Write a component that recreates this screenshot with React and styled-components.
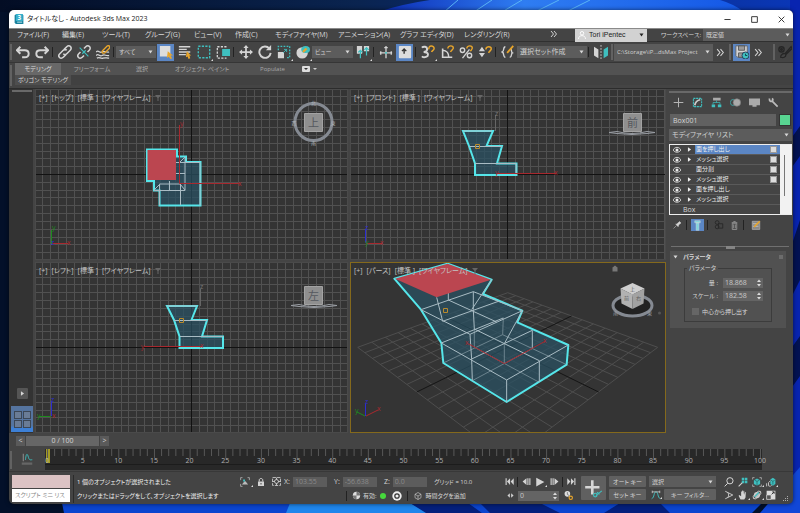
import React from 'react';
import styled, { createGlobalStyle, css } from 'styled-components';

const GlobalStyle = createGlobalStyle`
  * {
    box-sizing: border-box;
  }

  body {
    margin: 0;
    background: #04112c;
    color: #d6d6d6;
    font: 7px/10px 'Open Sans', 'Noto Sans CJK JP', sans-serif;
    font-feature-settings: 'palt';
  }

  button,
  input,
  select {
    margin: 0;
    padding: 0;
    border: 0;
    border-radius: 0;
    color: inherit;
    font: inherit;
    font-feature-settings: inherit;
  }
`;

/* ---------- desktop and window ---------- */

const Desktop = styled.div`
  position: relative;
  min-height: 100vh;
  padding: 10px 7px 9px 9px;
`;

const Wallpaper = styled.svg`
  position: absolute;
  inset: 0;
  width: 100%;
  height: 100%;
`;

const Window = styled.main`
  position: relative;
  display: flex;
  flex-direction: column;
  min-height: calc(100vh - 19px);
  overflow: hidden;
  border-radius: 5px;
  background: #444;
  box-shadow: 0 0 4px rgba(0, 0, 0, 0.6);
`;

const TitleBar = styled.header`
  display: flex;
  align-items: center;
  gap: 3px;
  height: 18px;
  padding-left: 5px;
  background: #fff;
  color: #222;
`;

const Title = styled.h1`
  flex: 1;
  margin: 0;
  font-size: 7px;
  font-weight: 400;
`;

const CaptionButton = styled.button`
  display: grid;
  place-items: center;
  width: 24px;
  height: 18px;
  background: none;
`;

const MenuBar = styled.nav`
  display: flex;
  align-items: center;
  height: 14px;
  padding-left: 8px;
  border-top: 1px solid #8a8a8a;
  border-bottom: 1px solid #303030;
`;

const MenuList = styled.div`
  display: grid;
  flex: 1;
  grid-template-columns: 45px 40px 43px 49px 41px 40px 63px 62px 64px 86px auto;
`;

const MenuButton = styled.button`
  background: none;
  color: #d8d8d8;
  text-align: left;
  white-space: nowrap;
`;

const UserButton = styled.button`
  display: flex;
  align-items: center;
  gap: 3px;
  width: 72px;
  height: 13px;
  padding: 0 3px;
  background: #d2d2d2;
  color: #222;
  font: 7px/12px 'Liberation Sans', sans-serif;

  span {
    flex: 1;
    text-align: left;
  }
`;

const WorkspaceLabel = styled.label`
  width: 56px;
  padding-right: 2px;
  font-size: 6px;
  text-align: right;
  white-space: nowrap;
`;

/* ---------- shared controls ---------- */

const SelectBox = styled.span`
  display: grid;
  flex: none;
  align-items: center;
  width: ${(p) => p.$w};
  height: ${(p) => p.$h || 12}px;
  background: #5c5c5c;
  color: #d0d0d0;
  font-size: ${(p) => (p.$small ? 6 : 7)}px;

  select {
    grid-area: 1 / 1;
    width: 100%;
    height: 100%;
    padding: 0 7px 0 3px;
    appearance: none;
    background: none;
    outline: none;
    text-overflow: ellipsis;
  }

  svg {
    grid-area: 1 / 1;
    justify-self: end;
    margin-right: 3px;
    pointer-events: none;
  }
`;

const Caret = ({ color = '#d8d8d8' }) => (
  <svg width="5" height="4" viewBox="0 0 5 4">
    <path d="M.5 .5h4L2.5 3.5z" fill={color} />
  </svg>
);

const Select = ({ label, value, id, w, h, small }) => (
  <SelectBox $w={w} $h={h} $small={small}>
    <select id={id} aria-label={label} defaultValue={value}>
      <option>{value}</option>
    </select>
    <Caret />
  </SelectBox>
);

const Bar = styled.span`
  flex: none;
  width: 1px;
  height: ${(p) => p.$h || 10}px;
  margin: 0 2px 0 1px;
  background: #222;
`;

const Grip = styled.span`
  flex: none;
  align-self: stretch;
  width: 2px;
  margin: 2px 1px;
  background: #626262;
`;

const IconButton = styled.button`
  position: relative;
  display: grid;
  flex: none;
  place-items: center;
  width: ${(p) => p.$w || 19}px;
  height: ${(p) => p.$h || 19}px;
  background: none;
  color: #d4d4d4;

  ${(p) =>
    p.$on &&
    css`
      border: 1px solid #444;
      background: #5b86c4;
    `}

  ${(p) =>
    p.$flyout &&
    css`
      &::after {
        position: absolute;
        right: 0;
        bottom: 1px;
        border: 1px solid #ddd;
        border-top-color: transparent;
        border-left-color: transparent;
        content: '';
      }
    `}
`;

const PlainButton = styled.button`
  height: 11px;
  padding: 0 2px;
  border-radius: 1px;
  background: #606060;
  color: #d4d4d4;
  font-size: 6px;
  line-height: 10px;
  white-space: nowrap;
`;

/* ---------- icons, all drawn on a 16 unit square ---------- */

const T = '#3fbfbf';
const O = '#e7a52c';

const ICONS = {
  app: (
    <g stroke="none">
      <path d="M1 2l3-2h9l2 2v14H3l-2-2z" fill="#19819c" />
      <path d="M3 0h11v11H3z" fill="#37b1cc" />
      <text x="5.5" y="9" fontSize="10" fontWeight="700" fill="#fff">3</text>
      <path d="M5 13h8" stroke="#bfeaf2" strokeWidth="1.5" />
    </g>
  ),
  undo: <path d="M5 2L1 6l4 4M1 6h9c6 0 6 8 0 8H7" strokeWidth="2.2" />,
  redo: <path d="M11 2l4 4-4 4M15 6H6c-6 0-6 8 0 8h3" strokeWidth="2.2" />,
  link: (
    <g strokeWidth="1.8">
      <path d="M7 5l3-3c3-3 7 1 4 4l-4 4c-1 1-3 1-4 0" />
      <path d="M9 11l-3 3c-3 3-7-1-4-4l4-4c1-1 3-1 4 0" />
    </g>
  ),
  unlink: (
    <g strokeWidth="1.8">
      <path d="M8 4l2-2c3-3 7 1 4 4l-2 2M8 12l-2 2c-3 3-7-1-4-4l2-2" />
      <path d="M3 3l10 10M6 10l4-4" stroke={T} strokeWidth="1.3" />
    </g>
  ),
  bind: (
    <g>
      <path d="M0 8c3-3 4 2 7 0s4 1 8 0M0 12c3-3 4 2 7 0s4 1 8 0M1 15c3-2 4 1 7 0s4 0 7 0" strokeWidth="1.4" />
      <path d="M8 6l5-5c3-1 3 2 2 3l-5 5c-3 1-4-1-2-3z" stroke={O} strokeWidth="1.6" />
    </g>
  ),
  select: (
    <g stroke="none">
      <path d="M1 1h12v12H1z" fill="#ddd" />
      <path d="M10 7l6 5-3 0 2 3-2 1-2-3-2 2z" fill={O} />
    </g>
  ),
  byName: (
    <g>
      <path d="M1 2h13M1 5h9M1 8h13M1 11h8" strokeWidth="1.6" />
      <path d="M10 7l5 5-2 0 1 3-2 1-1-3-2 1z" fill={O} stroke="none" />
    </g>
  ),
  rect: <path d="M1.5 1.5h13v13h-13z" stroke={T} strokeWidth="1.6" strokeDasharray="2.5 1.5" />,
  windowSel: (
    <g>
      <path d="M12 2H1.5v13H12" strokeWidth="1.5" strokeDasharray="2.5 1.5" />
      <path d="M7 4.5h9v8H7z" fill={T} stroke="none" />
    </g>
  ),
  move: (
    <g strokeWidth="2">
      <path d="M8 2v12M2 8h12" />
      <path d="M8 0l3 3.5H5zM8 16l3-3.5H5zM0 8l3.5-3v6zM16 8l-3.5-3v6z" fill="currentColor" stroke="none" />
    </g>
  ),
  rotate: (
    <g>
      <path d="M13 4A6.5 6.5 0 1 0 14.5 9" strokeWidth="2.2" />
      <path d="M15 0v6H9z" fill="currentColor" stroke="none" />
    </g>
  ),
  scale: (
    <g>
      <path d="M1.5 6V1.5h13v13H10" stroke={T} strokeWidth="1.5" strokeDasharray="2 1.5" />
      <path d="M1 8h7v7H1z" fill="currentColor" stroke="none" />
      <path d="M7 9l4-4M8 5h3v3" stroke={T} />
    </g>
  ),
  place: (
    <g>
      <circle cx="7" cy="9" r="6.5" fill="currentColor" stroke="none" />
      <ellipse cx="11" cy="5" rx="5" ry="4" fill={T} stroke="none" />
      <path d="M8 8l4-4" stroke={O} strokeWidth="2.5" />
    </g>
  ),
  pivot: (
    <g>
      <path d="M1 1h6v9H1zM9 1h6v6H9z" fill="currentColor" stroke="none" />
      <path d="M5 6v9M2.5 8.5L5 6l2.5 2.5M12 3v9M9.5 5.5L12 3l2.5 2.5" stroke={T} strokeWidth="1.4" />
    </g>
  ),
  manipulate: (
    <g strokeWidth="1.5">
      <path d="M8 1v14M1 9h14M6 3h4M2 7v4M14 7v4" />
      <path d="M7 8h2v2H7z" fill={T} stroke="none" />
    </g>
  ),
  override: (
    <g>
      <rect x="1" y="1" width="14" height="14" rx="1" fill="#ddd" stroke="none" />
      <path d="M7 10V5M4.5 7L7 4.500 9.500 7" stroke="#333" strokeWidth="1.6" />
    </g>
  ),
  snap: (
    <g>
      <path d="M1 3c2-2 6-1 6 1.5S5 8 3 8c3 0 5 1 5 3s-4 4.5-7 2" strokeWidth="2.2" />
      <path d="M9 5c-1-5 6-5 6-1 0 2-2 2-3 4" stroke={O} strokeWidth="1.7" />
    </g>
  ),
  angle: (
    <g>
      <path d="M3 4v10h11M3 6c5 0 7 4 7 8" strokeWidth="1.8" />
      <path d="M9 4c0-4 7-4 6 0-1 2-2 2-3 4" stroke={O} strokeWidth="1.7" />
    </g>
  ),
  percent: (
    <g>
      <circle cx="4" cy="6" r="2.5" strokeWidth="1.6" />
      <circle cx="12" cy="12" r="2.5" strokeWidth="1.6" />
      <path d="M12 5L4 15" strokeWidth="1.6" />
      <path d="M9 4c0-4 7-4 6 0-1 2-1 2-2 3" stroke={O} strokeWidth="1.7" />
    </g>
  ),
  spinner: (
    <g>
      <path d="M4.5 2L8 7H1zM4.5 14L8 9H1z" fill="currentColor" stroke="none" />
      <path d="M9 5c0-4 7-4 6 0-1 2-2 2-3 4" stroke={O} strokeWidth="1.7" />
    </g>
  ),
  braces: (
    <g>
      <path d="M5 2C2 2 4 7 1.5 8 4 9 2 14 5 14M11 5c2 0 0 3 2 4-2 1 0 5-3 5" strokeWidth="1.6" />
      <path d="M7 9l7-8" stroke={O} strokeWidth="2" />
    </g>
  ),
  mirror: (
    <g>
      <path d="M0 2l5 3v10l-5-3z" fill="currentColor" stroke="none" />
      <path d="M16 2l-5 3v10l5-3z" fill={T} stroke="none" />
      <path d="M8 0v16" strokeDasharray="2 1.5" />
    </g>
  ),
  save: (
    <g>
      <path d="M1 1h13v13H3l-2-2z" fill="#d4d4d4" stroke="#666" />
      <path d="M4 1h7v5H4zM4 9h7v5H4z" fill="#999" stroke="#555" />
      <circle cx="12" cy="12" r="4" fill={T} stroke="#235" />
      <path d="M12 10v2h2" stroke="#134" />
    </g>
  ),
  brush: (
    <g stroke="#262626" strokeWidth="1.5">
      <circle cx="4" cy="5" r="3" />
      <circle cx="4" cy="5" r="1" />
      <path d="M15 2L8 10c-2-1-5 1-5 4 3 1 6 0 6-3l7-7z" />
    </g>
  ),
  plus: <path d="M8 1v14M1 8h14" stroke="#b4b4b4" strokeWidth="1.5" />,
  modify: (
    <g stroke={T}>
      <path d="M2 2h12v12H2z" strokeWidth="1.5" strokeDasharray="3 1" />
      <path d="M4 12c1-5 3-7 8-8" stroke="#ccc" strokeWidth="2.5" />
    </g>
  ),
  hierarchy: (
    <g>
      <path d="M3 1h11v4H3z" fill="#aaa" stroke="none" />
      <path d="M8 5v3M3 11V8h10v3" stroke={T} />
      <path d="M1 11h5v4H1zM10 11h5v4h-5z" fill={T} stroke="none" />
    </g>
  ),
  motion: (
    <g>
      <circle cx="5" cy="8" r="4.5" stroke={T} />
      <circle cx="10" cy="8" r="5.5" fill="#aaa" stroke="#777" />
    </g>
  ),
  display: <path d="M0 2h16v10H0zM5 12h6v2H5z" fill="#aaa" stroke="none" />,
  wrench: <path d="M2 2c0 4 2 5 4 4l8 8M6 2c1 1 1 3 0 4" stroke="#bbb" strokeWidth="2.5" />,
  pin: <path d="M1 15l5-5M5 6l6 5M6 7l4-3 3-3 3 3-4 3-2 4z" fill="currentColor" strokeWidth="1" />,
  tube: <path d="M4 1h8v3H4zM6 4h4v11H6z" fill="#7fd6dd" stroke="#d8d8d8" strokeWidth=".7" />,
  copies: (
    <g stroke="#292929" strokeWidth="1.5">
      <circle cx="5" cy="4" r="3" />
      <path d="M7 6h7v7H7z" />
      <circle cx="5" cy="11" r="3" />
    </g>
  ),
  trash: <path d="M4 4h8v11H4zM3 3h10M6 1h4M6.5 6v7M9.5 6v7" stroke="#999" strokeWidth="1.5" />,
  configure: (
    <g>
      <path d="M2 2h12v13H2z" fill="#888" stroke="#bbb" />
      <path d="M3 6h9M3 10h9" stroke="#ddd" />
      <path d="M5 11l9-9" stroke={O} strokeWidth="2.5" />
    </g>
  ),
  curve: (
    <g>
      <path d="M3 1v10" strokeWidth="1.2" stroke="#999" />
      <path d="M6 9c1-11 3-7 4-3s3 3 5 3" stroke={T} strokeWidth="1.3" />
      <path d="M1 14h14" stroke="#666" strokeWidth="3" />
    </g>
  ),
  isolate: (
    <g>
      <path d="M1 5V1h3M12 1h3v4M1 11v4h3" />
      <path d="M3 12l5-6 5 6z" fill="#bbb" stroke="none" />
      <path d="M5 4h3v3H5z" fill={T} stroke="none" />
    </g>
  ),
  lock: (
    <g>
      <path d="M2 7h12v9H2z" fill="currentColor" stroke="none" />
      <path d="M4.5 7V4c0-4 7-4 7 0v3" strokeWidth="2" />
      <path d="M8 10v3" stroke="#444" strokeWidth="2" />
    </g>
  ),
  absolute: (
    <g strokeWidth="1.5">
      <path d="M1 1h14v14H1z" strokeDasharray="6 2" />
      <circle cx="8" cy="8" r="3.5" />
      <path d="M8 1v4M8 11v4M1 8h4M11 8h4" />
    </g>
  ),
  shield: (
    <g>
      <circle cx="8" cy="8" r="6.5" fill="#ddd" stroke="none" />
      <path d="M8 8V1.5A6.5 6.5 0 0 1 14.5 8zM8 8v6.5A6.5 6.5 0 0 1 1.5 8z" fill="#777" stroke="none" />
    </g>
  ),
  gear: (
    <g>
      <circle cx="8" cy="8" r="7.5" fill="#eee" stroke="none" />
      <circle cx="8" cy="8" r="3.5" stroke="#333" strokeWidth="2" />
    </g>
  ),
  cube: <path d="M8 1l6 3.5v7L8 15l-6-3.5v-7zM2 4.5L8 8l6-3.5M8 8v7" strokeWidth="1.2" />,
  first: <path d="M1 2h2v12H1zM9 2v12L3.5 8zM15.5 2v12L10 8z" fill="currentColor" stroke="none" />,
  prev: <path d="M8 2v12L1 8zM9.5 2h2v12h-2zM13 2h2v12h-2z" fill="currentColor" stroke="none" />,
  play: <path d="M2 1l13 7-13 7z" fill="currentColor" stroke="none" />,
  next: <path d="M8 2v12l7-6zM1 2h2v12H1zM4.5 2h2v12h-2z" fill="currentColor" stroke="none" />,
  last: <path d="M13 2h2v12h-2zM7 2v12l5.5-6zM.5 2v12L6 8z" fill="currentColor" stroke="none" />,
  keyMode: <path d="M6.5 3v10L1 8zM9.5 3v10L15 8z" fill="currentColor" stroke="none" />,
  timeConfig: (
    <g>
      <circle cx="6" cy="5" r="5" fill="#ddd" stroke="none" />
      <path d="M6 2v4l3 2" stroke="#444" />
      <circle cx="12" cy="12" r="3" stroke={O} strokeWidth="2" />
    </g>
  ),
  bigKey: (
    <g>
      <path d="M7 1v12M1 7h12" strokeWidth="2.2" />
      <path d="M10 14l5-4M11 13.5a1.5 1.5 0 1 1-3 0 1.5 1.5 0 0 1 3 0zM11 11l2 2" stroke={T} strokeWidth="1" />
    </g>
  ),
  tangent: (
    <g>
      <path d="M1 14C6 12 4 3 8 3s2 9 7 11" stroke={T} strokeWidth="1.5" />
      <path d="M2 3h12M2 1v4M14 1v4" strokeWidth="1.2" />
    </g>
  ),
  zoom: (
    <g strokeWidth="1.6">
      <circle cx="9.5" cy="6" r="5" />
      <path d="M6 10l-5 5" />
    </g>
  ),
  zoomAll: (
    <g>
      <path d="M6 1h4v4H6zM11 1h4v4h-4zM6 6h4v4H6zM11 6h4v4h-4z" fill={T} stroke="none" />
      <path d="M7 9l-6 6" strokeWidth="1.8" />
    </g>
  ),
  extents: (
    <g>
      <path d="M1 4V1h3M12 1h3v3M15 12v3h-3M4 15H1v-3" />
      <path d="M8 2.5l5 2.5v6l-5 2.5L3 11V5z" fill={T} stroke="none" />
      <path d="M4 5l4 2 4-2M8 7v6" stroke="#255" />
    </g>
  ),
  extentsAll: (
    <g>
      <path d="M7 4l4-3 4 3v7l-4 3-4-3z" fill={T} stroke="none" />
      <path d="M7 6l-3 3v5l3 1 2-2M1 10v5" stroke="#bbb" strokeWidth="1.6" />
      <path d="M8 5l3 2 3-2M11 7v5" stroke="#255" />
    </g>
  ),
  fov: <path d="M2 2l12 6-12 6M6 4c2 3 2 5 0 8" strokeWidth="1.4" />,
  hand: (
    <path
      d="M4 15l-3-6 1-1 3 2V3c0-1 1.500-1 1.500 0v4V1.500c0-1 1.500-1 1.500 0V7l.5-5c.2-1 1.500-1 1.500 0v6l1-4c.3-1 1.500-.7 1.500.3L12 12l-2 3z"
      fill="currentColor"
      stroke="none"
    />
  ),
  orbit: (
    <g>
      <circle cx="8" cy="8" r="5" fill="#bbb" stroke="none" />
      <ellipse cx="8" cy="8" rx="8" ry="3.5" transform="rotate(-45 8 8)" strokeWidth="1.5" />
      <path d="M4 11l7-7" stroke={T} strokeWidth="2" />
    </g>
  ),
  maximize: (
    <g>
      <path d="M1 1h14v14H1z" fill="#ddd" stroke="none" />
      <path d="M1 8h7v7H1z" fill="#555" stroke="#ddd" />
      <path d="M9 7l4-4M10 3h3v3" stroke="#333" strokeWidth="1.5" />
    </g>
  ),
  chevrons: <path d="M2 2l5 6-5 6M8 2l5 6-5 6" strokeWidth="1.9" />,
  person: (
    <g stroke="#fff" strokeWidth="1.8">
      <circle cx="8" cy="4.5" r="3.5" />
      <path d="M1 16c0-9 14-9 14 0" />
    </g>
  ),
  minimize: <path d="M1 8h14" strokeWidth="2" />,
  restore: <path d="M1.5 1.5h13v13h-13z" strokeWidth="2" />,
  close: <path d="M1.5 1.5l13 13M14.5 1.5l-13 13" strokeWidth="2" />,
  eye: (
    <g>
      <path d="M0 8c4-7 12-7 16 0-4 6-12 6-16 0z" strokeWidth="1.6" />
      <circle cx="8" cy="8" r="3" fill="currentColor" stroke="none" />
    </g>
  ),
  right: <path d="M3 1l10 7-10 7z" fill="currentColor" stroke="none" />,
};

const Icon = ({ name, size = 12 }) => (
  <svg width={size} height={size} viewBox="0 0 16 16" fill="none" stroke="currentColor" aria-hidden="true">
    {ICONS[name]}
  </svg>
);

/* ---------- toolbar and ribbon ---------- */

const ToolBar = styled.div`
  display: flex;
  align-items: center;
  height: 21px;
  border-bottom: 1px solid #363636;
`;

const Spring = styled.span`
  flex: 1;
`;

const Tool = ({ name, label, size = 14, ...rest }) => (
  <IconButton type="button" aria-label={label || name} {...rest}>
    <Icon name={name} size={size} />
  </IconButton>
);

const Tools = ({ names }) =>
  names.split(' ').map((n) => <Tool key={n} name={n.replace('*', '')} $flyout={n.endsWith('*')} />);

const Ribbon = styled.section`
  display: flex;
  height: 26px;
  border-bottom: 1px solid #2c2c2c;
`;

const RibbonBody = styled.div`
  flex: 1;
`;

const RibbonTabs = styled.div`
  display: grid;
  grid-template-columns: 46px 62px 38px 82px 59px auto;
  align-items: center;
  height: 12px;
  margin-left: 2px;
  background: #525252;
  color: #a8a8a8;
`;

const RibbonTab = styled.button`
  height: 12px;
  background: ${(p) => (p.$on ? '#686868' : 'none')};
  color: ${(p) => (p.$on ? '#dcdcdc' : 'inherit')};
  font-size: 6px;
  line-height: 11px;
  white-space: nowrap;
`;

const RibbonPanel = styled.div`
  height: 10px;
  margin: 0 0 3px 2px;
  background: #414141;

  button {
    min-width: 56px;
    height: 10px;
    background: #4e4e4e;
    font-size: 6px;
    white-space: nowrap;
  }
`;

/* ---------- work area ---------- */

const WorkArea = styled.div`
  display: grid;
  flex: 1;
  grid-template-columns: 26px minmax(0, 1fr) 127px;
  min-height: 344px;
`;

const Rail = styled.aside`
  display: flex;
  flex-direction: column;
  align-items: center;
  justify-content: flex-end;
  gap: 7px;
  margin-right: 2px;
  padding: 1px 0 1px 2px;
  background: #333;
`;

const RailGrip = styled.span`
  width: 20px;
  height: 2px;
  margin-bottom: auto;
  background: #696969;
`;

const RailButton = styled.button`
  display: grid;
  place-items: center;
  width: 11px;
  height: 11px;
  border-radius: 1px;
  background: #555;
`;

const LayoutButton = styled.button`
  display: grid;
  grid-template-columns: 8px 8px;
  grid-template-rows: 8px 8px;
  place-content: center;
  gap: 1px;
  width: 22px;
  height: 26px;
  background: linear-gradient(#55749f 75%, #3d80d6 85%);

  span {
    border: 1px solid #3c4756;
    background: #6a7c96;
  }
`;

const Viewports = styled.section`
  display: grid;
  grid-template-columns: 313fr 316fr;
  grid-template-rows: 1fr 1fr;
  gap: 2px;
`;

const ViewportFrame = styled.div`
  position: relative;
  min-width: 0;
  min-height: 171px;
  overflow: hidden;
  border: 1px solid ${(p) => (p.$active ? '#84691c' : '#4a4a4a')};
  background: #343434;
`;

const Scene = styled.svg`
  position: absolute;
  inset: 0;
  width: 100%;
  height: 100%;

  text {
    font: 7px 'Open Sans', 'Noto Sans CJK JP', sans-serif;
  }

  .small {
    font-size: 5px;
  }

  .face {
    font: 11px 'Noto Sans CJK JP', sans-serif;
  }
`;

const ViewportLabel = styled.div`
  position: absolute;
  top: 3px;
  left: 3px;
  display: flex;
  align-items: center;
  gap: 4px;
  color: #c4c4c4;
  white-space: nowrap;
`;

const STEP = 7.83;

const RED = '#a8282e';
const GREEN = '#1e8a1e';
const BLUE = '#2c2cd0';

// Orthographic grid; the two lines through the origin are black.
const FlatGrid = ({ x, y, cx, cy, w, h }) => {
  const cols = [];
  const rows = [];
  for (let i = -24; i <= 24; i += 1) {
    const gx = Math.round(cx + i * STEP) + 0.5;
    const gy = Math.round(cy + i * STEP) + 0.5;
    if (i !== 0 && gx > x && gx < x + w) cols.push(gx);
    if (i !== 0 && gy > y && gy < y + h) rows.push(gy);
  }
  return (
    <g>
      <g stroke="#515151">
        {cols.map((v) => (
          <path key={v} d={`M${v} ${y}v${h}`} />
        ))}
        {rows.map((v) => (
          <path key={v} d={`M${x} ${v}h${w}`} />
        ))}
      </g>
      <path d={`M${cx + 0.5} ${y}v${h}M${x} ${cy + 0.5}h${w}`} stroke="#121212" />
    </g>
  );
};

// Ground plane point (-1..1 on both axes) to the perspective view.
const project = (p, q) => {
  const w = 1 + 0.175 * (p + q);
  return `${(507.7 + (75 * (p - q)) / w).toFixed(1)} ${(136.8 + 210.5 / w).toFixed(1)}`;
};

const GroundGrid = () => {
  const lines = [-7, -6, -5, -4, -3, -2, -1, 1, 2, 3, 4, 5, 6, 7].map((n) => n / 7);
  return (
    <g fill="none">
      <g stroke="#4e4e4e">
        {lines.map((t) => (
          <path key={t} d={`M${project(t, -1)}L${project(t, 1)}M${project(-1, t)}L${project(1, t)}`} />
        ))}
      </g>
      <path d={`M${project(0, -1)}L${project(0, 1)}M${project(-1, 0)}L${project(1, 0)}`} stroke="#151515" />
    </g>
  );
};

const Solid = styled.path`
  fill: rgba(42, 82, 100, 0.72);
  stroke: #55e6ea;
  stroke-width: 2px;
`;

const Wire = styled.path`
  fill: none;
  stroke: #a9bcc4;
  stroke-width: 1px;
`;

const Axis = styled.path`
  fill: none;
  stroke: ${(p) => p.$c || RED};
  stroke-width: 1px;
`;

const Marker = ({ x, y }) => (
  <path d={`M${x - 2} ${y - 2}h4v4h-4z`} fill="none" stroke="#b98a2c" strokeWidth="1" />
);

const CubeFace = ({ x, y, face }) => (
  <g>
    <path d={`M${x - 9} ${y - 9}h18v18h-18z`} fill="#8f8f8f" stroke="#a3a3a3" />
    <text className="face" x={x} y={y + 4} textAnchor="middle" fill="#55585e">{face}</text>
  </g>
);

const FlatRing = ({ x, y }) => (
  <g fill="none" stroke="#9a9ea4">
    <path d={`M${x - 23} ${y}l8-1q15 4 30 0l8 1-8 1q-15 2-30 0z`} />
  </g>
);

const Filter = () => (
  <svg width="6" height="6" viewBox="0 0 6 6">
    <path d="M0 0h6L3.5 3v3h-1V3z" fill="#666" />
  </svg>
);

const Viewport = ({ name, box, active, children }) => (
  <ViewportFrame $active={active}>
    <Scene viewBox={box} preserveAspectRatio="xMidYMid slice">
      {children}
    </Scene>
    <ViewportLabel>
      <span>[+]</span>
      <span>[{name}]</span>
      <span>[標準 ]</span>
      <span>[ワイヤフレーム]</span>
      <Filter />
    </ViewportLabel>
  </ViewportFrame>
);

const TopView = () => (
  <Viewport name="トップ" box="36 90 311 169">
    <FlatGrid x={36} y={90} cx={191} cy={174} w={311} h={169} />
    <Solid d="M147 149.5H177V156.5H186V162H200.5V205.5H159.5V190.5H154V181H147z" />
    <Wire d="M176 162.5h24v43M159.5 205v-21h21v21M169.5 181v9M154 190.5h31V157M176 173.5h9M154 190l6-6M180 162l5-5M180 184l5 6" />
    <path d="M147.5 150h28.5v30h-28.5z" fill="#bb4650" />
    <Axis d="M179.5 125v58.5h60" />
    <text x="180" y="126" fill={RED}>y</text>
    <text x="238" y="186" fill={RED}>x</text>
    <Axis d="M51.5 230v14" $c={GREEN} />
    <Axis d="M52 243.5h16" />
    <text x="52" y="230" fill={GREEN}>y</text>
    <text x="67" y="245" fill={RED}>x</text>
    <text x="51" y="245" fill={BLUE}>z</text>
    <circle cx="313.5" cy="122" r="18.5" fill="none" stroke="#858a92" strokeWidth="3" />
    <g fill="#aeb2b8" textAnchor="middle">
      <text className="small" x="313.5" y="105">北</text>
      <text className="small" x="313.5" y="145">南</text>
      <text className="small" x="294" y="125">西</text>
      <text className="small" x="333" y="125">東</text>
    </g>
    <CubeFace x={313.5} y={122.5} face="上" />
  </Viewport>
);

const FrontView = () => (
  <Viewport name="フロント" box="351 90 314 169">
    <FlatGrid x={351} y={90} cx={507} cy={174} w={314} h={169} />
    <Solid d="M463 131H493L486.5 146H502L497 163.5H516.5V175H475V163.5L469 146z" />
    <Wire d="M463 131h29M469 146.5h33M475 163.5h41V175" />
    <Marker x={477.5} y={146.5} />
    <Axis d="M495.5 115v16" $c="#666" />
    <text x="495" y="116" fill="#777">z</text>
    <Axis d="M497 173.5h59" />
    <text x="495" y="175" fill={RED}>y</text>
    <text x="554" y="175" fill={RED}>x</text>
    <Axis d="M365.5 229v14" $c={BLUE} />
    <Axis d="M367 243.5h15" />
    <text x="365" y="230" fill={BLUE}>z</text>
    <text x="380" y="245" fill={RED}>x</text>
    <text x="365" y="245" fill={GREEN}>y</text>
    <FlatRing x={632} y={132.5} />
    <CubeFace x={632.5} y={122.5} face="前" />
  </Viewport>
);

const LeftView = () => (
  <Viewport name="レフト" box="36 263 311 169">
    <FlatGrid x={36} y={263} cx={191} cy={347} w={311} h={169} />
    <Solid d="M167 306H197L191.5 320H207L202 336.5H223V348H179.5V336.5L174 320z" />
    <Wire d="M167 306h30M174 320.5h33M180 336.5h43" />
    <Marker x={181.5} y={320.5} />
    <Axis d="M200.5 289v17" $c="#666" />
    <text x="200" y="289" fill="#777">z</text>
    <Axis d="M144 346.5h58" />
    <text x="141" y="349" fill={RED}>y</text>
    <text x="200" y="348" fill={RED}>x</text>
    <Axis d="M51.5 402v14" $c={BLUE} />
    <Axis d="M39 416.5h12" $c={GREEN} />
    <text x="51" y="402" fill={BLUE}>z</text>
    <text x="37" y="418" fill={GREEN}>y</text>
    <text x="52" y="418" fill={RED}>x</text>
    <FlatRing x={314} y={305.5} />
    <CubeFace x={313.5} y={295.5} face="左" />
  </Viewport>
);

const PerspectiveView = () => (
  <Viewport name="パース" box="351 263 314 169" active>
    <GroundGrid />
    <g transform="translate(345 258) scale(.3333)">
      <Solid
        vectorEffect="non-scaling-stroke"
        strokeLinejoin="round"
        d="M148 62L308 17 440 65 414 108 532 158 517 193 670 261 665 320 485 432 295 315 289 255 228 155z"
      />
      <Wire
        vectorEffect="non-scaling-stroke"
        d="M275 118l18 72M310 100v26M440 65l-60 90M385 101v54M228 155L385 101 532 158 375 229zM293 190L460 130M310 126L455 192M375 229l5 74M532 158l-54 99M385 155l3 58"
      />
      <Wire
        vectorEffect="non-scaling-stroke"
        d="M289 255L475 180M670 261L485 366 289 255M388 213L583 308v64M380 303L562 217v55M380 303l2 65M485 366v66"
      />
      <Wire
        vectorEffect="non-scaling-stroke"
        opacity=".5"
        d="M475 180l-2 50M295 315L473 230 665 320M388 213v55L581 372M382 368L562 272M478 257v58"
      />
      <path d="M150 62L308 17 438 65 275 118z" fill="#bb4650" />
      <Axis vectorEffect="non-scaling-stroke" d="M370 257l108 60 122-67" />
    </g>
    <text x="465" y="345" fill={RED}>x</text>
    <text x="543" y="343" fill={RED}>x</text>
    <Marker x={445.5} y={310.5} />
    <Axis d="M365.5 404v12" $c={BLUE} />
    <Axis d="M366 416l12-6" />
    <Axis d="M365 416l-8-4" $c={GREEN} />
    <text x="365" y="404" fill={BLUE}>z</text>
    <text x="377" y="411" fill={RED}>x</text>
    <text x="355" y="413" fill={GREEN}>y</text>
    <path d="M615 265.5l3 2.5h-.5v3.5h-5V268h-.5z" fill="#777" />
    <ellipse cx="632.5" cy="305.5" rx="19.5" ry="10.5" fill="#222" stroke="#858a92" strokeWidth="3" />
    <path d="M632.5 283l12 5.5-12 6-12-6z" fill="#cfcfcf" />
    <path d="M620.5 288.5l12 6v14.5l-11-5.5z" fill="#b2b2b2" />
    <path d="M644.5 288.5l-12 6v14.5l11-5.5z" fill="#a2a2a2" />
    <g fill="#5c5c5c">
      <text className="small" x="630" y="291">上</text>
      <text className="small" x="624" y="300">前</text>
      <text className="small" x="636" y="300">右</text>
    </g>
    <g fill="#9a9ea4">
      <text className="small" x="613" y="315">南</text>
      <text className="small" x="647" y="315">東</text>
    </g>
    <circle cx="659.5" cy="313" r="1.5" fill="#555" />
  </Viewport>
);

/* ---------- command panel ---------- */

const Panel = styled.aside`
  display: flex;
  flex-direction: column;
  padding: 2px 1px 0 3px;
`;

const PanelGrip = styled.div`
  height: 2px;
  background: #696969;
`;

const PanelTabs = styled.div`
  display: flex;
  margin: 1px 0 2px;
`;

const NameRow = styled.div`
  display: flex;
  gap: 3px;
  margin: 1px 1px 3px;

  input {
    flex: 1;
    min-width: 0;
    height: 12px;
    padding: 0 3px;
    background: #616161;
  }

  button {
    width: 12px;
    height: 12px;
    border: 1px solid #333;
    background: #58d491;
  }
`;

const Stack = styled.div`
  display: grid;
  grid-template-columns: 1fr 11px;
  height: 71px;
  margin: 3px 0;
  overflow: hidden;
  border: 1px solid #eee;
`;

const StackList = styled.ul`
  margin: 0;
  padding: 0;
  font-size: 6px;
  list-style: none;
`;

const StackRow = styled.li`
  display: grid;
  grid-template-columns: 14px 8px 1fr;
  align-items: center;
  height: 10px;
  padding-left: 3px;
  border-bottom: 1px solid #5a5a5a;
  color: #eee;
  line-height: 9px;
`;

const StackName = styled.span`
  display: flex;
  align-items: center;
  justify-content: space-between;
  grid-column: 3;
  height: 9px;
  padding-right: 3px;
  padding-left: 1px;
  background: ${(p) => (p.$on ? '#5b86c4' : 'none')};

  i {
    width: 7px;
    height: 7px;
    border: 1px solid #999;
    background: #ddd;
  }
`;

const BaseRow = styled.li`
  padding-left: 13px;
  font-size: 7px;
  line-height: 10px;
`;

const StackScroll = styled.div`
  padding: 10px 0 0 4px;
  background: #f2f2f2;

  &::before {
    display: block;
    width: 1px;
    height: 41px;
    background: #777;
    content: '';
  }
`;

const StackTools = styled.div`
  display: flex;
  align-items: center;
  gap: 1px;
  height: 14px;
`;

const Splitter = styled.div`
  height: 1px;
  margin: 14px 3px 4px 2px;
  background: #707070;

  &::after {
    display: block;
    width: 9px;
    height: 3px;
    margin: auto;
    background: #858585;
    content: '';
  }
`;

const Rollout = styled.section`
  margin: 0 6px 0 1px;
  padding: 1px 14px 6px;
  background: #515151;
  font-size: 6px;

  h2 {
    display: flex;
    align-items: center;
    gap: 5px;
    margin: 0 -11px 2px;
    font-size: 6px;
    line-height: 10px;
  }

  h2::after {
    width: 4px;
    height: 4px;
    margin-left: auto;
    background: #6c6c6c;
    content: '';
  }
`;

const Group = styled.fieldset`
  display: grid;
  gap: 3px;
  margin: 0;
  padding: 6px 7px 4px;
  border: 1px solid #3c3c3c;

  legend {
    margin-left: -5px;
    padding: 0 2px;
    line-height: 8px;
  }
`;

const Param = styled.div`
  display: grid;
  grid-template-columns: 1fr 40px;
  align-items: center;
  gap: 5px;
  padding-right: 1px;

  label {
    text-align: right;
    white-space: nowrap;
  }
`;

const Spin = styled.span`
  display: flex;
  align-items: center;
  justify-content: space-between;
  width: ${(p) => (p.$w ? `${p.$w}px` : 'auto')};
  height: 10px;
  padding: 0 2px;
  background: #646464;
  color: #c8c8c8;
  font-size: 7px;

  input {
    flex: 1;
    width: 100%;
    min-width: 0;
    background: none;
  }
`;

const Arrows = () => (
  <svg width="4" height="8" viewBox="0 0 4 8">
    <path d="M0 3l2-2.5L4 3zM0 5l2 2.5L4 5z" fill="#ddd" />
  </svg>
);

const Check = styled.label`
  display: flex;
  align-items: center;
  gap: 3px;
  height: 11px;
  margin-top: 2px;
  white-space: nowrap;

  input {
    width: 7px;
    height: 7px;
    appearance: none;
    background: #666;
  }
`;

const PANEL_TABS = ['plus', 'modify', 'hierarchy', 'motion', 'display', 'wrench'];

const MODIFIERS = [
  { name: '面を押し出し', open: true, box: true, on: true },
  { name: 'メッシュ選択', open: true, box: true },
  { name: '面分割', box: true },
  { name: 'メッシュ選択', open: true, box: true },
  { name: '面を押し出し', open: true },
  { name: 'メッシュ選択', open: true },
];

const CommandPanel = () => (
  <Panel>
    <PanelGrip />
    <PanelTabs>
      {PANEL_TABS.map((t) => (
        <Tool key={t} name={t} size={11} $h={17} />
      ))}
    </PanelTabs>
    <NameRow>
      <input aria-label="オブジェクト名" defaultValue="Box001" />
      <button type="button" aria-label="オブジェクト カラー" />
    </NameRow>
    <Select label="モディファイヤ リスト" value="モディファイヤ リスト" w="100%" h={12} />
    <Stack>
      <StackList>
        {MODIFIERS.map((m, i) => (
          <StackRow key={i}>
            <Icon name="eye" size={8} />
            {m.open && <Icon name="right" size={5} />}
            <StackName $on={m.on}>
              {m.name}
              {m.box && <i />}
            </StackName>
          </StackRow>
        ))}
        <BaseRow>Box</BaseRow>
      </StackList>
      <StackScroll />
    </Stack>
    <StackTools>
      <Tool name="pin" size={8} $w={15} $h={14} />
      <Bar />
      <Tool name="tube" size={11} $w={15} $h={14} $on />
      <Bar />
      <Tool name="copies" size={10} $w={16} $h={14} />
      <Tool name="trash" size={9} $w={13} $h={14} />
      <Bar />
      <Tool name="configure" size={10} $w={17} $h={14} />
    </StackTools>
    <Splitter />
    <Rollout>
      <h2>
        <Caret />
        パラメータ
      </h2>
      <Group>
        <legend>パラメータ</legend>
        <Param>
          <label htmlFor="amount">量 :</label>
          <Spin>
            <input id="amount" defaultValue="18.868" />
            <Arrows />
          </Spin>
        </Param>
        <Param>
          <label htmlFor="scale">スケール :</label>
          <Spin>
            <input id="scale" defaultValue="182.58" />
            <Arrows />
          </Spin>
        </Param>
        <Check>
          <input type="checkbox" />
          中心から押し出す
        </Check>
      </Group>
    </Rollout>
  </Panel>
);

/* ---------- time line ---------- */

const SliderRow = styled.div`
  display: flex;
  align-items: center;
  gap: 1px;
  height: 16px;
  padding: 0 7px;

  button {
    width: 9px;
    height: 10px;
    background: #5a5a5a;
  }
`;

const SliderThumb = styled.div`
  width: 73px;
  height: 10px;
  background: #666;
  line-height: 10px;
  text-align: center;
`;

const TrackRow = styled.div`
  display: flex;
  height: 22px;
`;

const TrackTools = styled.div`
  flex: none;
  width: 32px;
`;

const Track = styled.div`
  flex: 1;
  height: 21px;
  margin-right: 31px;
  padding: 0 2px;
  background: linear-gradient(#282828 15px, #1c1c1c 15px 16px, #282828 16px);

  svg {
    display: block;
    width: 100%;
    height: 21px;
    overflow: visible;
  }

  text {
    fill: #b0b0b0;
  }
`;

const FRAMES = Array.from({ length: 101 }, (_, i) => i);

const TimeTrack = () => (
  <TrackRow>
    <Grip />
    <TrackTools>
      <Tool name="curve" size={12} $w={28} />
    </TrackTools>
    <Track>
      <svg>
        <rect x="-1" y="0" width="4" height="14" fill="#a39a24" />
        {FRAMES.map((f) => (
          <rect key={f} x={`${f}%`} y="0" width="1" height={f % 5 ? 7 : 9} fill="#585858" />
        ))}
        {FRAMES.filter((f) => f % 5 === 0).map((f) => (
          <text key={f} x={`${f}%`} y="14" textAnchor="middle">
            {f}
          </text>
        ))}
      </svg>
    </Track>
  </TrackRow>
);

/* ---------- status bar ---------- */

const StatusBar = styled.footer`
  display: flex;
  align-items: flex-start;
  height: 33px;
  padding: 3px 2px 2px 3px;
  border-top: 1px solid #383838;
`;

const Listener = styled.div`
  display: grid;
  flex: none;
  grid-template-rows: 13px 13px;
  gap: 1px;
  width: 58px;
  color: #888;
  font-size: 6px;
  line-height: 13px;
  white-space: nowrap;

  input {
    width: 100%;
    background: #dcc3c4;
  }

  span {
    padding-left: 3px;
    background: #fff;
  }
`;

const Messages = styled.div`
  flex: 1;
  min-width: 0;
  margin-left: 3px;
  padding-left: 3px;
  border-left: 1px solid #2b2b2b;
  color: #eee;
  font-size: 6px;
  line-height: 14px;
  white-space: nowrap;

  p {
    margin: 0;
  }
`;

const Coords = styled.div`
  display: grid;
  gap: 1px;
  width: 266px;
`;

const CoordRow = styled.div`
  display: flex;
  align-items: center;
  height: 13px;
  padding-left: ${(p) => p.$indent || 0}px;
  white-space: nowrap;
`;

const Note = styled.span`
  font-size: 6px;
`;

const Coord = styled.label`
  display: flex;
  align-items: center;
  gap: 3px;
  width: 50px;

  input {
    width: 34px;
    height: 10px;
    padding: 0 2px;
    background: #5c5c5c;
    color: #8a8a8a;
  }
`;

const Lamp = styled.span`
  width: 6px;
  height: 6px;
  margin: 0 3px;
  border-radius: 50%;
  background: #46d83c;
`;

const Playback = styled.div`
  display: grid;
  gap: 1px;
  width: 76px;
`;

const Keys = styled.div`
  display: grid;
  grid-template-columns: 25px 37px 67px;
  grid-template-rows: 11px 11px;
  gap: 2px 3px;
  margin: 1px 6px 0 2px;
`;

const BigKey = styled.button`
  display: grid;
  grid-row: span 2;
  place-items: center;
  border-radius: 1px;
  background: #606060;
`;

const FilterCell = styled.span`
  display: grid;
  grid-template-columns: 15px 1fr;
  align-items: center;
`;

const Navigation = styled.div`
  display: grid;
  grid-template-columns: repeat(4, 14px);
  grid-auto-rows: 13px;
  margin-right: 5px;
`;

const SizeGrip = styled.svg`
  align-self: flex-end;
  width: 6px;
  height: 6px;
  margin-right: 2px;
`;

const MENUS = [
  'ファイル(F)',
  '編集(E)',
  'ツール(T)',
  'グループ(G)',
  'ビュー(V)',
  '作成(C)',
  'モディファイヤ(M)',
  'アニメーション(A)',
  'グラフ エディタ(D)',
  'レンダリング(R)',
];

const TABS = ['モデリング', 'フリーフォーム', '選択', 'オブジェクト ペイント', 'Populate'];

const App = () => (
  <>
    <GlobalStyle />
    <Desktop>
      <Wallpaper viewBox="0 0 800 513" preserveAspectRatio="none">
        <defs>
          <linearGradient id="sky">
            <stop offset="0" stopColor="#030d24" />
            <stop offset=".45" stopColor="#0a2450" />
            <stop offset="1" stopColor="#0a37b8" />
          </linearGradient>
          <linearGradient id="petal">
            <stop offset="0" stopColor="#0c2cb4" />
            <stop offset=".4" stopColor="#2f7df2" />
            <stop offset="1" stopColor="#1457e6" />
          </linearGradient>
        </defs>
        <path d="M0 0h800v513H0z" fill="#031029" />
        <path d="M0 0h800v12H0z" fill="url(#sky)" />
        <path d="M378 12q24-8 52-12h290q14 4 24 12z" fill="url(#petal)" />
        <path d="M444 12l14-12M474 12l18-12M502 12l20-12M535 12l24-12M566 12l24-12" stroke="#5ab4f4" />
        <path d="M790 0h10v513h-10z" fill="#0824b0" />
        <path d="M790 140l10-14v30l-10 14zM790 250l10-30v60l-10 20zM790 350l10-14v40l-10 14z" fill="#031252" />
        <path d="M62 503h700l-10 10H64z" fill="#0b45cf" />
        <path d="M290 503h120l20 10H286z" fill="#1f86ec" />
        <path d="M410 503h58l14 10h-56zM480 503h60l20 10h-70zM620 503h40l10 10h-66z" fill="#04207c" />
        <path d="M760 513l40-46v46z" fill="#1147d8" />
      </Wallpaper>
      <Window>
        <TitleBar>
          <Icon name="app" size={10} />
          <Title>タイトルなし - Autodesk 3ds Max 2023</Title>
          {['minimize', 'restore', 'close'].map((n) => (
            <CaptionButton key={n} type="button" aria-label={n}>
              <Icon name={n} size={7} />
            </CaptionButton>
          ))}
        </TitleBar>

        <MenuBar>
          <MenuList>
            {MENUS.map((m) => (
              <MenuButton key={m} type="button">
                {m}
              </MenuButton>
            ))}
            <MenuButton type="button" aria-label="その他">
              <Icon name="chevrons" size={8} />
            </MenuButton>
          </MenuList>
          <UserButton type="button">
            <Icon name="person" size={8} />
            <span>Tori iPentec</span>
            <Caret color="#222" />
          </UserButton>
          <WorkspaceLabel htmlFor="workspace">ワークスペース:</WorkspaceLabel>
          <Select id="workspace" value="既定値" w="90px" small />
        </MenuBar>

        <ToolBar>
          <Grip />
          <Tools names="undo redo" />
          <Bar />
          <Tools names="link unlink bind" />
          <Bar />
          <Select label="選択フィルタ" value="すべて" w="40px" small />
          <Tool name="select" $on />
          <Tools names="byName rect* windowSel" />
          <Bar />
          <Tools names="move rotate scale* place*" />
          <Select label="参照座標系" value="ビュー" w="41px" small />
          <Tools names="pivot*" />
          <Bar />
          <Tools names="manipulate" />
          <Tool name="override" $on />
          <Bar />
          <Tools names="snap* angle percent spinner" />
          <Bar />
          <Tools names="braces" />
          <Select label="名前付き選択セット" value="選択セット作成" w="70px" />
          <Bar />
          <Tools names="mirror" />
          <Grip />
          <Select label="プロジェクト" value="C:\Storage\iP...dsMax Project" w="99px" h={17} small />
          <Tool name="chevrons" label="その他" size={9} $w={15} />
          <Grip />
          <Tool name="save" $on />
          <Tool name="chevrons" label="その他" size={9} $w={15} />
          <Spring />
          <Grip />
          <Tool name="brush" $w={17} />
        </ToolBar>

        <Ribbon>
          <Grip />
          <RibbonBody>
            <RibbonTabs>
              {TABS.map((t, i) => (
                <RibbonTab key={t} type="button" $on={i === 0}>
                  {t}
                </RibbonTab>
              ))}
              <svg width="16" height="6" viewBox="0 0 16 6">
                <rect width="8" height="6" rx="1" fill="#ddd" />
                <path d="M2 2h4L4 4z" fill="#333" />
                <path d="M11 2h4l-2 2z" fill="#ccc" />
              </svg>
            </RibbonTabs>
            <RibbonPanel>
              <button type="button">ポリゴン モデリング</button>
            </RibbonPanel>
          </RibbonBody>
        </Ribbon>

        <WorkArea>
          <Rail>
            <RailGrip />
            <RailButton type="button" aria-label="展開">
              <Icon name="right" size={5} />
            </RailButton>
            <LayoutButton type="button" aria-label="ビューポート レイアウト">
              <span />
              <span />
              <span />
              <span />
            </LayoutButton>
          </Rail>
          <Viewports>
            <TopView />
            <FrontView />
            <LeftView />
            <PerspectiveView />
          </Viewports>
          <CommandPanel />
        </WorkArea>

        <SliderRow>
          <button type="button">&lt;</button>
          <SliderThumb>0 / 100</SliderThumb>
          <button type="button">&gt;</button>
        </SliderRow>
        <TimeTrack />

        <StatusBar>
          <Listener>
            <input aria-label="マクロ レコーダ" />
            <span>スクリプト ミニ リス</span>
          </Listener>
          <Messages>
            <p>1 個のオブジェクトが選択されました</p>
            <p>クリックまたはドラッグをして、オブジェクトを選択します</p>
          </Messages>
          <Coords>
            <CoordRow>
              <Tool name="isolate" size={10} $w={16} $h={13} $flyout />
              <Tool name="lock" size={8} $w={16} $h={13} />
              <Tool name="absolute" size={9} $w={15} $h={13} />
              <Coord>
                X: <input defaultValue="103.55" />
              </Coord>
              <Coord>
                Y: <input defaultValue="-56.638" />
              </Coord>
              <Coord>
                Z: <input defaultValue="0.0" />
              </Coord>
              <Note>グリッド = 10.0</Note>
            </CoordRow>
            <CoordRow $indent={108}>
              <Bar />
              <Tool name="shield" size={9} $w={14} $h={13} />
              <Note>有効:</Note>
              <Lamp />
              <Tool name="gear" size={10} $w={17} $h={13} />
              <Bar />
              <Tool name="cube" size={8} $w={16} $h={13} />
              <Note>時間タグを追加</Note>
            </CoordRow>
          </Coords>
          <Playback>
            <CoordRow>
              <Tool name="first" size={9} $w={13} $h={13} />
              <Bar />
              <Tool name="prev" size={9} $w={13} $h={13} />
              <Tool name="play" size={10} $w={14} $h={13} $flyout />
              <Tool name="next" size={9} $w={14} $h={13} />
              <Bar />
              <Tool name="last" size={9} $w={13} $h={13} />
            </CoordRow>
            <CoordRow>
              <Tool name="keyMode" size={7} $w={15} $h={13} />
              <Spin $w={41}>
                <input aria-label="現在のフレーム" defaultValue="0" />
                <Arrows />
              </Spin>
              <Tool name="timeConfig" size={9} $w={18} $h={13} />
            </CoordRow>
          </Playback>
          <Keys>
            <BigKey type="button" aria-label="キーを設定">
              <Icon name="bigKey" size={19} />
            </BigKey>
            <PlainButton type="button">オート キー</PlainButton>
            <Select label="キー対象" value="選択" w="100%" h={11} small />
            <PlainButton type="button">セット キー</PlainButton>
            <FilterCell>
              <Tool name="tangent" size={10} $w={13} $h={11} $flyout />
              <PlainButton type="button">キー フィルタ...</PlainButton>
            </FilterCell>
          </Keys>
          <Navigation>
            {['zoom', 'zoomAll', 'extents', 'extentsAll', 'fov', 'hand', 'orbit', 'maximize'].map((n, i) => (
              <Tool key={n} name={n} size={10} $w={14} $h={13} $flyout={i > 1 && i < 7} />
            ))}
          </Navigation>
          <SizeGrip viewBox="0 0 6 6">
            <path d="M4 0h1v1H4zM2 2h1v1H2zM4 2h1v1H4zM0 4h1v1H0zM2 4h1v1H2zM4 4h1v1H4z" fill="#aaa" />
          </SizeGrip>
        </StatusBar>
      </Window>
    </Desktop>
  </>
);

export default App;
